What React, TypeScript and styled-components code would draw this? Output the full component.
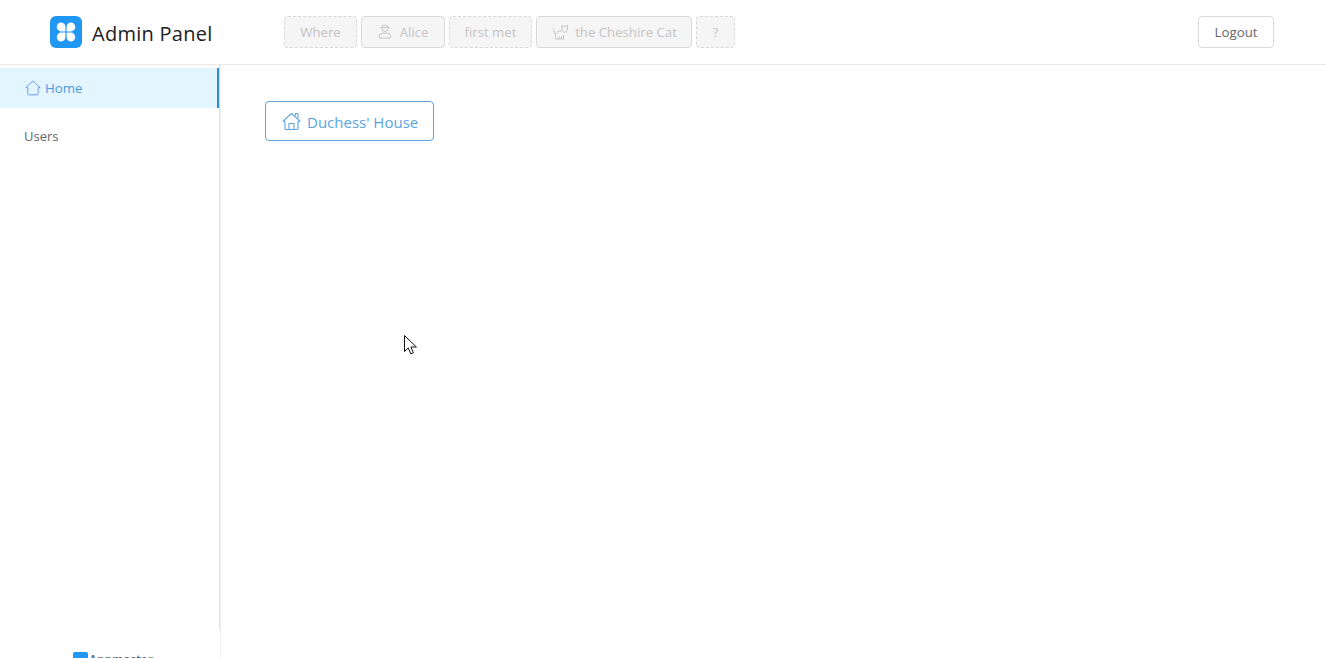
import React from "react";
import styled, { createGlobalStyle } from "styled-components";

const GlobalStyle = createGlobalStyle`
  html, body {
    margin: 0;
    padding: 0;
    height: 100%;
    background: #fff;
    overflow: hidden;
  }
  body {
    font-family: "Open Sans", "Noto Sans", sans-serif;
    color: #595959;
  }
  * { box-sizing: border-box; }
`;

const Page = styled.div`
  position: relative;
  display: flex;
  flex-direction: column;
  height: 658px;
  overflow: hidden;
`;

const Header = styled.header`
  display: flex;
  align-items: center;
  height: 65px;
  flex: none;
  padding: 0 52px 1px 50px;
  border-bottom: 1px solid #e8e8e8;
`;

const Brand = styled.div`
  display: flex;
  align-items: center;
  gap: 10px;
  width: 234px;
  flex: none;
`;

const BrandMark = styled.div`
  width: 32px;
  height: 32px;
  border-radius: 6px;
  background: #2196f3;
  display: flex;
  align-items: center;
  justify-content: center;
`;

const BrandName = styled.span`
  font-size: 20px;
  font-weight: 500;
  letter-spacing: 0.27px;
  color: #212121;
  white-space: nowrap;
  padding-top: 3px;
`;

const Puzzle = styled.div`
  display: flex;
  gap: 4px;
  flex: 1;
`;

const Piece = styled.div<{ $dashed?: boolean; $width: number; $gap?: number; $shift?: number }>`
  display: flex;
  align-items: center;
  justify-content: center;
  gap: ${(p) => p.$gap ?? 6}px;
  height: 32px;
  width: ${(p) => p.$width}px;
  padding-left: ${(p) => p.$shift ?? 0}px;
  border: 1px ${(p) => (p.$dashed ? "dashed" : "solid")} #d9d9d9;
  border-radius: 4px;
  background: #f5f5f5;
  color: #c4c4c4;
  font-size: 13.2px;
  white-space: nowrap;
`;

const LogoutButton = styled.button`
  width: 76px;
  height: 32px;
  border: 1px solid #d9d9d9;
  border-radius: 4px;
  background: #fff;
  color: #666;
  font-family: inherit;
  font-size: 13.3px;
  padding: 0;
`;

const Body = styled.div`
  display: flex;
  flex: 1;
  min-height: 0;
`;

const Sidebar = styled.aside`
  width: 221px;
  flex: none;
  display: flex;
  flex-direction: column;
  border-right: 1px solid #f0f0f0;
  overflow: hidden;
`;

const Menu = styled.nav`
  width: 221px;
  height: 565px;
  flex: none;
  padding-top: 3px;
  border-right: 2px solid #e2e2e2;
  display: flex;
  flex-direction: column;
  gap: 8px;
`;

const MenuItem = styled.div<{ $active?: boolean }>`
  display: flex;
  align-items: center;
  gap: 4px;
  width: 219px;
  height: 40px;
  padding-left: ${(p) => (p.$active ? 25 : 24)}px;
  font-size: ${(p) => (p.$active ? 13.3 : 13)}px;
  color: ${(p) => (p.$active ? "#4a9ae0" : "#666")};
  background: ${(p) => (p.$active ? "#e3f5ff" : "transparent")};
  border-right: ${(p) => (p.$active ? "2px solid #2b8ad0" : "none")};
`;

const SidebarFooter = styled.div`
  display: flex;
  align-items: flex-start;
  gap: 1px;
  padding: 22px 0 0 73px;
  flex: none;
  font-size: 12px;
  font-weight: 600;
`;

const FooterMark = styled.div`
  width: 15px;
  height: 15px;
  border-radius: 2px;
  background: #2196f3;
`;

const FooterName = styled.span`
  line-height: 15px;
  color: #5b6b7b;
`;

const Content = styled.main`
  flex: 1;
  padding: 36px 44px;
`;

const RoomButton = styled.button`
  display: inline-flex;
  align-items: center;
  gap: 6px;
  width: 169px;
  height: 40px;
  padding: 0 0 0 16px;
  border: 1px solid #5aa5e0;
  border-radius: 4px;
  background: #fff;
  color: #5aa5e0;
  font-family: inherit;
  font-size: 15px;
`;

const RoomLabel = styled.span`
  padding-top: 2px;
`;

const Cursor = styled.svg`
  position: absolute;
  left: 404px;
  top: 335px;
`;

const LogoIcon = () => (
  <svg width="22" height="22" viewBox="0 0 22 22" fill="#fff">
    <path d="M6.2 1.500a4.700 4.700 0 0 1 4.200 4.700v4.200H6.200a4.450 4.450 0 0 1 0-8.900z" />
    <path d="M15.800 1.500a4.700 4.700 0 0 0-4.200 4.700v4.200h4.200a4.450 4.450 0 0 0 0-8.900z" />
    <path d="M6.200 20.500a4.700 4.700 0 0 0 4.200-4.700v-4.200H6.200a4.450 4.450 0 0 0 0 8.900z" />
    <path d="M15.800 20.500a4.700 4.700 0 0 1-4.200-4.700v-4.200h4.200a4.450 4.450 0 0 1 0 8.900z" />
  </svg>
);

const HomeIcon = () => (
  <svg width="16" height="16" viewBox="0 0 16 16" fill="none" stroke="#6d9fe8" strokeWidth="1" strokeLinejoin="round">
    <path d="M.8 7.600 8 .9l7.200 6.700h-2v6.200a1 1 0 0 1-1 1H3.800a1 1 0 0 1-1-1V7.600z" />
  </svg>
);

const PersonIcon = () => (
  <svg width="14" height="15" viewBox="0 0 14 15" fill="none" stroke="#c4c4c4" strokeWidth="1">
    <circle cx="7" cy="4.200" r="3.200" />
    <path d="M2.600 3.600h8.800" />
    <path d="M1.500 14v-1.800A3 3 0 0 1 4.500 9.200h5a3 3 0 0 1 3 3V14z" />
  </svg>
);

const CatIcon = () => (
  <svg width="16" height="16" viewBox="0 0 16 16" fill="none" stroke="#c4c4c4" strokeWidth="1" strokeLinejoin="round">
    <path d="M.8 4.500c0 3 .6 5 1.800 6.300V15h8v-3.600" />
    <path d="M2.800 10c1-2.200 3-3.200 5.700-3.200" />
    <path d="M9 1.200v4.300c0 1.700 1 2.700 2.500 2.700s2.800-1 2.800-2.700V1.200l-1.700 1.400h-2.200z" />
    <path d="M6 15v-3M8.600 15v-3" />
  </svg>
);

const HouseIcon = () => (
  <svg width="19" height="19" viewBox="0 0 19 19" fill="none" stroke="#5aa5e0" strokeWidth="1.1" strokeLinejoin="round">
    <path d="M1 9.200 9.500 1.500 18 9.200h-2v7.300a1 1 0 0 1-1 1H4a1 1 0 0 1-1-1V9.200z" />
    <path d="M7 17.500v-6h5v6" />
    <path d="M13.500 3.800V1.500h2.500v4.500" />
  </svg>
);

const App: React.FC = () => {
  return (
    <Page>
      <GlobalStyle />
      <Header>
        <Brand>
          <BrandMark>
            <LogoIcon />
          </BrandMark>
          <BrandName>Admin Panel</BrandName>
        </Brand>
        <Puzzle>
          <Piece $dashed $width={73}>Where</Piece>
          <Piece $width={84} $gap={8}>
            <PersonIcon />
            Alice
          </Piece>
          <Piece $dashed $width={83}>first met</Piece>
          <Piece $width={156} $shift={2}>
            <CatIcon />
            the Cheshire Cat
          </Piece>
          <Piece $dashed $width={39}>?</Piece>
        </Puzzle>
        <LogoutButton>Logout</LogoutButton>
      </Header>
      <Body>
        <Sidebar>
          <Menu>
            <MenuItem $active>
              <HomeIcon />
              Home
            </MenuItem>
            <MenuItem>Users</MenuItem>
          </Menu>
          <SidebarFooter>
            <FooterMark />
            <FooterName>Appmaster</FooterName>
          </SidebarFooter>
        </Sidebar>
        <Content>
          <RoomButton>
            <HouseIcon />
            <RoomLabel>Duchess' House</RoomLabel>
          </RoomButton>
        </Content>
      </Body>
      <Cursor width="13" height="20" viewBox="0 0 13 20">
        <path d="M.5.500v16l3.800-3.600 2.500 6 2.600-1.100-2.500-5.800h5.500z" fill="#fff" stroke="#111" strokeWidth="1" />
      </Cursor>
    </Page>
  );
};

export default App;
